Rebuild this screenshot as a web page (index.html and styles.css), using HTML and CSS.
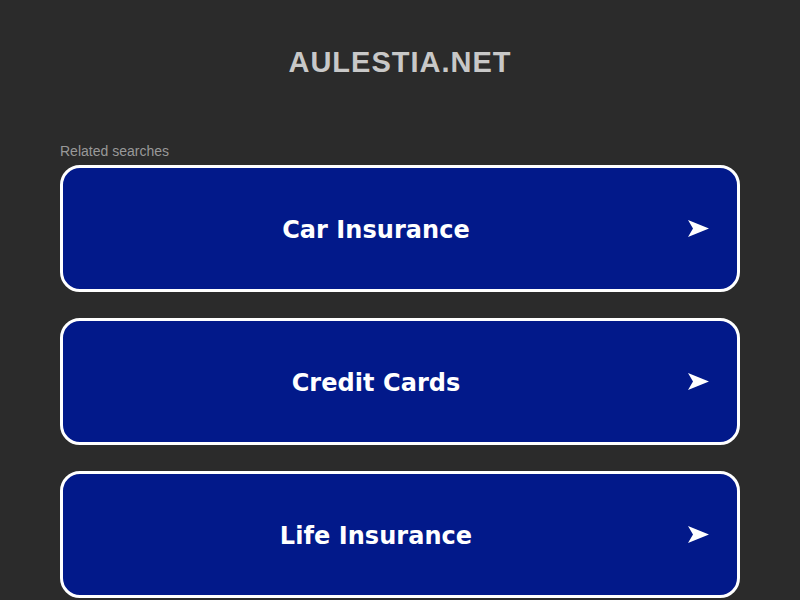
FILE: index.html
```html
<!DOCTYPE html>
<html lang="en">
<head>
<meta charset="utf-8">
<title>aulestia.net</title>
<link rel="stylesheet" href="styles.css">
</head>
<body>
<header class="header">
  <h1 class="domain">AULESTIA.NET</h1>
</header>
<main class="main">
  <div class="label">Related searches</div>
  <ul class="links">
    <li><a class="card" href="#"><span class="card-text">Car Insurance</span><span class="card-arrow"><svg width="21" height="17" viewBox="0 0 21 17"><path d="M0 0 L21 8.5 L0 17 L5 8.5 Z" fill="#fff"/></svg></span></a></li>
    <li><a class="card" href="#"><span class="card-text">Credit Cards</span><span class="card-arrow"><svg width="21" height="17" viewBox="0 0 21 17"><path d="M0 0 L21 8.5 L0 17 L5 8.5 Z" fill="#fff"/></svg></span></a></li>
    <li><a class="card" href="#"><span class="card-text">Life Insurance</span><span class="card-arrow"><svg width="21" height="17" viewBox="0 0 21 17"><path d="M0 0 L21 8.5 L0 17 L5 8.5 Z" fill="#fff"/></svg></span></a></li>
  </ul>
</main>
</body>
</html>
```
FILE: styles.css
```css
html, body {
  margin: 0;
  padding: 0;
  background: #2b2b2b;
}
body {
  font-family: "Liberation Sans", Arial, sans-serif;
  overflow: hidden;
}
.header {
  padding-top: 45px;
}
.domain {
  margin: 0;
  text-align: center;
  font-size: 29px;
  line-height: 34px;
  font-weight: bold;
  letter-spacing: 1px;
  color: #c8c8c8;
}
.main {
  padding: 64px 60px 0;
}
.label {
  font-size: 14px;
  line-height: 16px;
  color: #999999;
  margin-bottom: 6px;
}
.links {
  list-style: none;
  margin: 0;
  padding: 0;
  display: flex;
  flex-direction: column;
  gap: 26px;
}
.card {
  display: flex;
  align-items: center;
  height: 127px;
  box-sizing: border-box;
  border: 3px solid #ffffff;
  border-radius: 20px;
  background: #02198a;
  color: #ffffff;
  text-decoration: none;
  padding-left: 20px;
}
.card-text {
  flex: 1;
  text-align: center;
  font-family: "DejaVu Sans", Verdana, sans-serif;
  font-weight: bold;
  font-size: 24px;
  letter-spacing: 0.05px;
  padding-top: 2px;
}
.card-arrow {
  width: 68px;
  display: flex;
  align-items: center;
  justify-content: flex-start;
  padding-left: 19px;
  box-sizing: border-box;
}
.card-arrow svg {
  display: block;
}
```
